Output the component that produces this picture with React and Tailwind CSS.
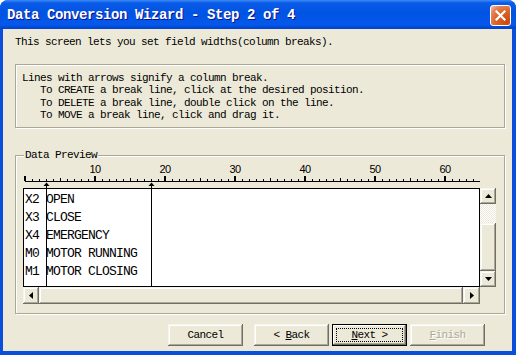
const ROWS = [
  ['X2', 'OPEN'],
  ['X3', 'CLOSE'],
  ['X4', 'EMERGENCY'],
  ['M0', 'MOTOR RUNNING'],
  ['M1', 'MOTOR CLOSING'],
]

const BREAKS = [3, 18]
const TICKS = Array.from({ length: 65 }, (_, i) => i)
const LABELS = [10, 20, 30, 40, 50, 60]

const raised =
  'bg-[#ece9d8] shadow-[inset_-1px_-1px_#716f64,inset_1px_1px_#f5f4ee,inset_-2px_-2px_#aca899,inset_2px_2px_#fff]'

function Arrow({ dir }) {
  const pts = {
    up: '0,4 3.5,0 7,4',
    down: '0,0 3.5,4 7,0',
    left: '4,0 0,3.5 4,7',
    right: '0,0 4,3.5 0,7',
  }[dir]
  const vert = dir === 'up' || dir === 'down'
  return (
    <svg width={vert ? 7 : 4} height={vert ? 4 : 7} viewBox={vert ? '0 0 7 4' : '0 0 4 7'}>
      <polygon points={pts} fill="#000" />
    </svg>
  )
}

function ScrollBtn({ dir, className = '' }) {
  return (
    <div className={`${raised} flex items-center justify-center ${className}`}>
      <Arrow dir={dir} />
    </div>
  )
}

function Button({ children, className = '', def, disabled }) {
  return (
    <div
      className={`relative h-[22px] w-[75px] flex items-center justify-center ${raised} ${
        def ? 'outline outline-1 outline-black -outline-offset-1 shadow-[inset_-2px_-2px_#716f64,inset_2px_2px_#fff,inset_-3px_-3px_#aca899]' : ''
      } ${disabled ? 'text-[#aca899] [text-shadow:1px_1px_#fff]' : ''} ${className}`}
    >
      {def && <div className="absolute inset-[4px] border border-dotted border-black" />}
      <span className="whitespace-pre">{children}</span>
    </div>
  )
}

export default function App() {
  return (
    <div className="w-[516px] h-[355px] flex flex-col rounded-t-[8px] overflow-hidden bg-[#0a4fdc] font-['Liberation_Mono',monospace] text-[11px] tracking-[-0.6px] text-black">
      {/* title bar */}
      <div className="h-[29px] shrink-0 flex pl-[7px] pr-[5px] bg-[linear-gradient(180deg,#3d8cf5,#0a5ae8_10%,#0054e3_45%,#0558ea_85%,#004ad8_94%,#0a3fc8)]">
        <span className="mt-[8px] h-[14px] leading-[14px] text-white font-bold text-[14px] tracking-[-0.4px] [text-shadow:1px_1px_#0f1089]">
          Data Conversion Wizard - Step 2 of 4
        </span>
        <div className="ml-auto mt-[5px] w-[21px] h-[21px] rounded-[3px] border border-white flex items-center justify-center bg-[radial-gradient(circle_at_85%_85%,#c84a10_0%,#dc6527_50%,#e0825a_75%,#f4b89a_95%)]">
          <svg width="11" height="11" viewBox="0 0 11 11">
            <path d="M1.5 1.5 L9.5 9.5 M9.5 1.5 L1.5 9.5" stroke="#fff" strokeWidth="2.2" strokeLinecap="square" />
          </svg>
        </div>
      </div>

      {/* body */}
      <div className="flex-1 ml-[3px] mr-[4px] mb-[4px] bg-[#ece9d8] flex flex-col">
        <p className="ml-[12px] mt-[7px] h-[12px] leading-[12px]">
          This screen lets you set field widths(column breaks).
        </p>

        <div className="ml-[12px] mt-[16px] w-[490px] h-[64px] border border-[#aca899] shadow-[inset_1px_1px_#fff,1px_1px_#fff] pl-[6px] pt-[7px] leading-[12.4px] whitespace-pre">
          {'Lines with arrows signify a column break.\n   To CREATE a break line, click at the desired position.\n   To DELETE a break line, double click on the line.\n   To MOVE a break line, click and drag it.'}
        </div>

        {/* data preview */}
        <div className="relative ml-[12px] mt-[27px] w-[490px] h-[159px] shrink-0 border border-[#aca899] shadow-[inset_1px_1px_#fff,1px_1px_#fff] pt-[32px] pl-[7px]">
          <span className="absolute left-[8px] top-[-7px] h-[12px] leading-[12px] px-[1px] bg-[#ece9d8]">
            Data Preview
          </span>

          <div className="w-[473px] h-[116px] grid grid-cols-[457px_16px] grid-rows-[99px_17px]">
            <div className="bg-white border border-black pl-[1px] pt-[2px] font-['Liberation_Mono',monospace] text-[13px] tracking-[-0.8px]">
              {ROWS.map(([a, b]) => (
                <div key={a} className="h-[18px] leading-[18px] whitespace-pre">
                  {a} {b}
                </div>
              ))}
            </div>
            <div className="flex flex-col">
              <ScrollBtn dir="up" className="h-[16px]" />
              <div className="h-[19px] bg-[repeating-conic-gradient(#fff_0%_25%,#ece9d8_0%_50%)] bg-[length:2px_2px]" />
              <div className={`flex-1 ${raised}`} />
              <ScrollBtn dir="down" className="h-[16px]" />
            </div>
            <div className="flex">
              <ScrollBtn dir="left" className="w-[16px]" />
              <div className={`flex-1 ${raised}`} />
              <ScrollBtn dir="right" className="w-[17px]" />
            </div>
            <div />
          </div>

          {/* ruler and column breaks */}
          <svg
            className="absolute left-0 top-0 pointer-events-none"
            width="488"
            height="157"
            viewBox="16 156 488 157"
            shapeRendering="crispEdges"
          >
            <rect x="25" y="181" width="455" height="1" fill="#000" />
            {TICKS.map((i) => {
              const x = 25 + 7 * i
              if (i % 10 === 0) return <rect key={i} x={x - 1} y="176" width="2" height="5" fill="#000" />
              if (i % 5 === 0) return <rect key={i} x={x} y="178" width="1" height="3" fill="#000" />
              return <rect key={i} x={x} y="179" width="1" height="2" fill="#000" />
            })}
            {LABELS.map((n) => (
              <text
                key={n}
                x={25 + 7 * n}
                y="173"
                textAnchor="middle"
                fontSize="11"
                fontFamily="'Liberation Sans', Arial, sans-serif"
                fill="#000"
                shapeRendering="auto"
              >
                {n}
              </text>
            ))}
            {BREAKS.map((b) => {
              const x = 25 + 7 * b
              return (
                <g key={b}>
                  <polygon points={`${x + 0.5},182.5 ${x - 2.5},186 ${x + 3.5},186`} fill="#000" shapeRendering="auto" />
                  <rect x={x} y="183" width="1" height="104" fill="#000" />
                </g>
              )
            })}
          </svg>
        </div>

        {/* buttons */}
        <div className="flex mt-[10px] ml-[165px]">
          <Button>Cancel</Button>
          <Button className="ml-[11px]">
            {'< '}
            <u>B</u>ack
          </Button>
          <Button className="ml-[3px]" def>
            <u>N</u>
            {'ext >'}
          </Button>
          <Button className="ml-[3px]" disabled>
            <u>F</u>inish
          </Button>
        </div>
      </div>
    </div>
  )
}
